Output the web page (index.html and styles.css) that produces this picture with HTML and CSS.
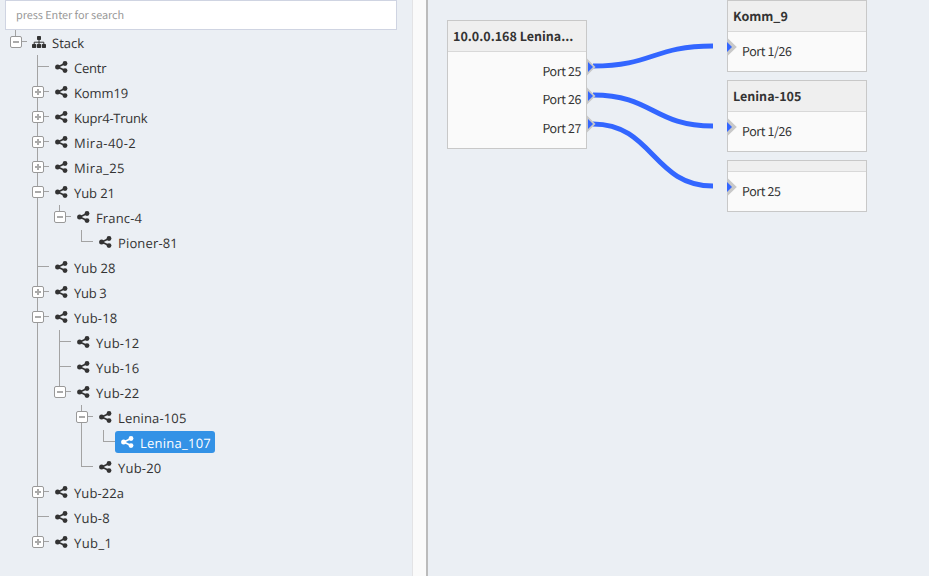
FILE: index.html
```html
<!DOCTYPE html>
<html lang="en">
<head>
<meta charset="utf-8">
<title>Stack topology</title>
<link rel="stylesheet" href="styles.css">
</head>
<body>
<svg class="symbols" aria-hidden="true">
  <symbol id="share" viewBox="0 0 13 12"><path d="M10 2.5 2.8 6 10 9.6" fill="none" stroke="currentColor" stroke-width="1.7"/><circle cx="10" cy="2.5" r="2.4"/><circle cx="2.6" cy="6" r="2.5"/><circle cx="10" cy="9.6" r="2.4"/></symbol>
  <symbol id="sitemap" viewBox="0 0 14 12"><path d="M7 3v5M2.2 9V6.2h9.6V9" fill="none" stroke="currentColor" stroke-width="1"/><rect x="5" y="0" width="4" height="4" rx=".7"/><rect x="0" y="8" width="4.2" height="4" rx=".7"/><rect x="4.9" y="8" width="4.2" height="4" rx=".7"/><rect x="9.8" y="8" width="4.2" height="4" rx=".7"/></symbol>
</svg>
<div class="app">
  <aside class="sidebar">
    <input class="search" type="text" placeholder="press Enter for search">
    <ul class="tree root" id="tree"></ul>
  </aside>
  <div class="splitter"></div>
  <main class="canvas">
    <section class="node source">
      <h2>10.0.0.168 Lenina...</h2>
      <div class="ports"><div class="port">Port 25</div><div class="port">Port 26</div><div class="port">Port 27</div></div>
    </section>
    <section class="node target komm"><h2>Komm_9</h2><div class="port">Port 1/26</div></section>
    <section class="node target lenina"><h2>Lenina-105</h2><div class="port">Port 1/26</div></section>
    <section class="node target unnamed"><h2></h2><div class="port">Port 25</div></section>
    <svg class="links" viewBox="428 0 501 576">
      <g class="wire">
        <path d="M593 66C653 66 653 46 713 46"/>
        <path d="M593 95C653 95 653 126 713 126"/>
        <path d="M593 124C653 124 653 186 713 186"/>
      </g>
      <g class="plug">
        <path d="M587 58.5 595.5 67 587 75.5z"/><path d="M587 87.5 595.5 96 587 104.5z"/><path d="M587 115.5 595.5 124 587 132.5z"/>
        <path d="M728 38.5 736.8 47 728 55.5z"/><path d="M728 118.5 736.8 127 728 135.5z"/><path d="M728 178.5 736.8 187 728 195.5z"/>
      </g>
      <g class="pin">
        <path d="M588 62 593 67 588 72z"/><path d="M588 91 593 96 588 101z"/><path d="M588 119 593 124 588 129z"/>
        <path d="M727 42 732 47 727 52z"/><path d="M727 122 732 127 727 132z"/><path d="M727 182 732 187 727 192z"/>
      </g>
    </svg>
  </main>
</div>
<script src="tree.js"></script>
</body>
</html>
```
FILE: styles.css
```css
* { box-sizing: border-box; }
body { margin: 0; background: #ebeff4; color: #333; overflow: hidden; text-rendering: geometricPrecision; }
.symbols { position: absolute; width: 0; height: 0; }
.app { display: flex; height: 576px; }
.sidebar { width: 412px; padding-left: 5px; flex: none; }
.search { display: block; width: 392px; height: 30px; padding: 0 10px; border: 1px solid #cfd4e2; border-radius: 0; background: #fff; font: 10.9px "Noto Sans CJK SC", "Noto Sans", sans-serif; letter-spacing: -0.05px; text-rendering: geometricPrecision; }
.search::placeholder { color: #999; opacity: 1; }
.splitter { width: 16px; flex: none; border-left: 1px solid #e3e3e5; border-right: 2px solid #bbb; background: #fafafa; }

.tree { list-style: none; margin: 0; padding: 0 0 0 22px; font: 13px "Open Sans", "Noto Sans", sans-serif; }
.tree.root { padding-left: 5px; }
.tree li { position: relative; }
.tree li::before { content: ""; position: absolute; left: 5px; top: 0; bottom: 0; width: 1px; background: #a3a3a3; }
.tree li:last-child::before { bottom: auto; height: 12px; }
.row { display: flex; height: 25px; position: relative; }
.row::before { content: ""; position: absolute; left: 5px; top: 11px; width: 12px; height: 1px; background: #a3a3a3; }
.toggle { width: 12px; height: 12px; margin-top: 6px; flex: none; position: relative; }
.toggle.open, .toggle.closed { border: 1px solid #999; border-radius: 2px; background: #fff; }
.toggle.open::before, .toggle.closed::before { content: ""; position: absolute; left: 2px; top: 4px; width: 6px; height: 2px; background: #aaa; }
.toggle.closed::after { content: ""; position: absolute; left: 4px; top: 2px; width: 2px; height: 6px; background: #aaa; }
.label { display: flex; height: 22px; margin: 1px 0 0 5px; padding: 0 4px 0 6px; border-radius: 3px; line-height: 24px; white-space: nowrap; }
.label svg { width: 13px; height: 12px; margin: 5px 6px 0 0; fill: currentColor; }
.root > li > .row svg { width: 14px; margin-left: -1px; }
.label.selected { background: #3392e6; color: #fff; }

.canvas { position: relative; flex: 1; font: 12.4px "Noto Sans CJK SC", "Noto Sans", sans-serif; }
.node { position: absolute; width: 140px; border: 1px solid #c8c8c8; background: #fafafa; }
.node h2 { margin: 0; height: 31px; padding: 0 5px; border-bottom: 1px solid #d8d8d8; background: #efefef; font-size: 12.5px; font-weight: 700; line-height: 29px; white-space: nowrap; }
.port { letter-spacing: -0.35px; }
.source { left: 19px; top: 20px; height: 129px; }
.source .ports { padding: 5px 5px 0 0; text-align: right; }
.source .port { height: 28.4px; line-height: 28px; }
.target { left: 299px; height: 72px; }
.target .port { padding-left: 14px; line-height: 39px; }
.komm { top: 0; }
.lenina { top: 80px; }
.unnamed { top: 160px; height: 52px; }
.unnamed h2 { height: 11px; }
.links { position: absolute; left: 0; top: 0; width: 501px; height: 576px; }
.wire { fill: none; stroke: #36f; stroke-width: 5; }
.plug { fill: #c8c8c8; }
.pin { fill: #36f; }
```
FILE: tree.js
```js
// Each entry: [name, letter spacing in px, children, state]
const data = [["Stack", 0, [
  ["Centr", -0.2], ["Komm19", -0.1, [], "closed"], ["Kupr4-Trunk", -0.25, [], "closed"],
  ["Mira-40-2", 0.45, [], "closed"], ["Mira_25", 0.4, [], "closed"],
  ["Yub 21", -0.1, [["Franc-4", 0.15, [["Pioner-81", 0.15]]]]],
  ["Yub 28", 0], ["Yub 3", -0.3, [], "closed"],
  ["Yub-18", 0.2, [["Yub-12", 0.2], ["Yub-16", 0.2],
    ["Yub-22", 0.2, [["Lenina-105", 0.15, [["Lenina_107", 0.25, null, "selected"]]], ["Yub-20", 0.2]]]]],
  ["Yub-22a", 0.1, [], "closed"], ["Yub-8", 0.2], ["Yub_1", 0.4, [], "closed"]
]]];

function render(items, root) {
  return items.map(([name, spacing, children, state]) => {
    const toggle = children ? (state === "closed" ? "closed" : "open") : "";
    const selected = state === "selected" ? " selected" : "";
    const nested = children && children.length ? `<ul class="tree">${render(children)}</ul>` : "";
    return `<li><div class="row"><span class="toggle ${toggle}"></span><span class="label${selected}"><svg><use href="#${root ? "sitemap" : "share"}"/></svg><span class="name" style="letter-spacing:${spacing}px">${name}</span></span></div>${nested}</li>`;
  }).join("");
}
document.getElementById("tree").innerHTML = render(data, true);
```
